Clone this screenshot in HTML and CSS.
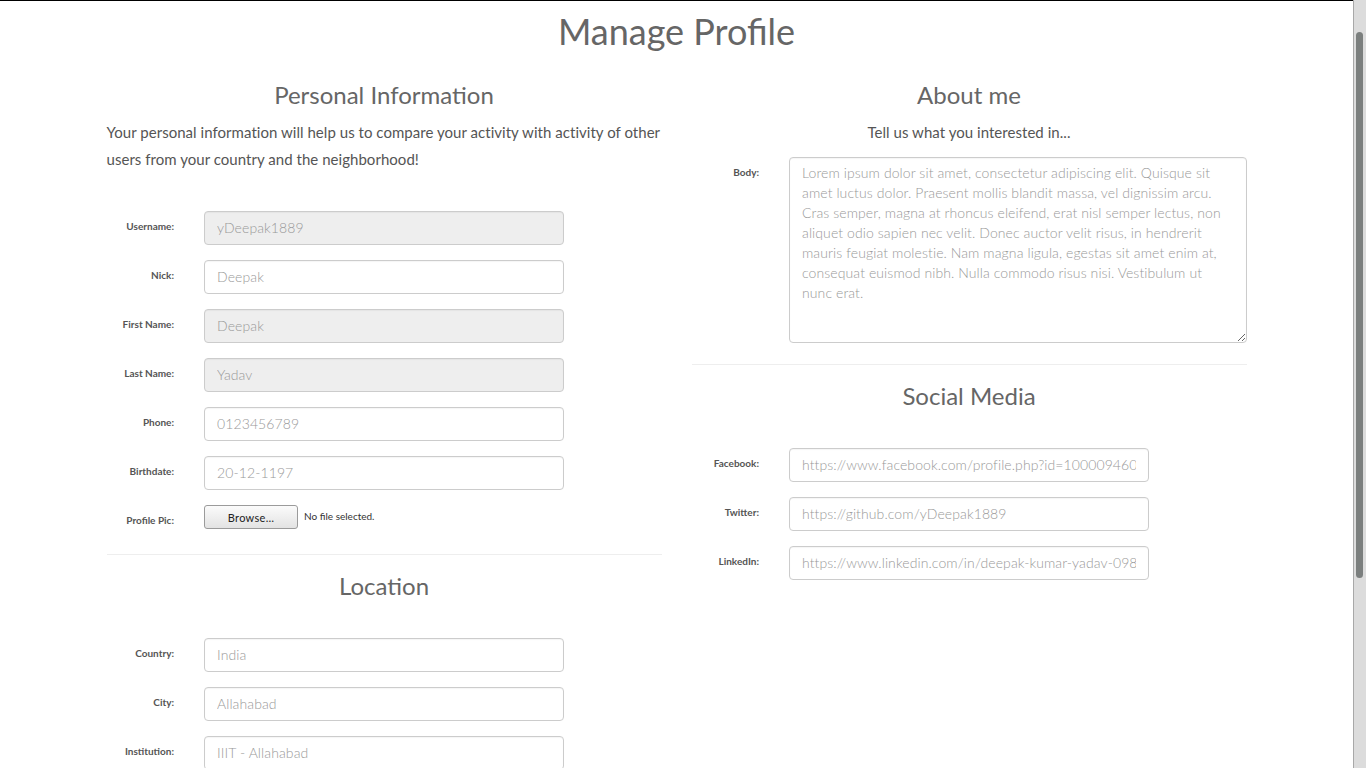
FILE: index.html
```html
<!DOCTYPE html>
<html lang="en">
<head>
<meta charset="utf-8">
<title>Manage Profile</title>
<link rel="stylesheet" href="styles.css">
</head>
<body>
<div class="page">
  <h1 class="title">Manage Profile</h1>
  <div class="columns">
    <section class="col">
      <h3 class="heading">Personal Information</h3>
      <p class="lead">Your personal information will help us to compare your activity with activity of other users from your country and the neighborhood!</p>
      <form class="form form-personal">
        <label class="lbl">Username:</label>
        <input class="field" type="text" value="yDeepak1889" disabled>
        <label class="lbl">Nick:</label>
        <input class="field" type="text" value="Deepak">
        <label class="lbl">First Name:</label>
        <input class="field" type="text" value="Deepak" disabled>
        <label class="lbl">Last Name:</label>
        <input class="field" type="text" value="Yadav" disabled>
        <label class="lbl">Phone:</label>
        <input class="field" type="text" value="0123456789">
        <label class="lbl">Birthdate:</label>
        <input class="field" type="text" value="20-12-1197">
        <label class="lbl">Profile Pic:</label>
        <div class="file">
          <button class="browse" type="button">Browse…</button>
          <span class="nofile">No file selected.</span>
        </div>
      </form>
      <hr class="rule rule-left">
      <h3 class="heading">Location</h3>
      <form class="form form-location">
        <label class="lbl">Country:</label>
        <input class="field" type="text" value="India">
        <label class="lbl">City:</label>
        <input class="field" type="text" value="Allahabad">
        <label class="lbl">Institution:</label>
        <input class="field" type="text" value="IIIT - Allahabad">
      </form>
    </section>
    <section class="col">
      <h3 class="heading">About me</h3>
      <p class="lead center">Tell us what you interested in...</p>
      <form class="form form-about">
        <label class="lbl">Body:</label>
        <textarea class="field area">Lorem ipsum dolor sit amet, consectetur adipiscing elit. Quisque sit amet luctus dolor. Praesent mollis blandit massa, vel dignissim arcu. Cras semper, magna at rhoncus eleifend, erat nisl semper lectus, non aliquet odio sapien nec velit. Donec auctor velit risus, in hendrerit mauris feugiat molestie. Nam magna ligula, egestas sit amet enim at, consequat euismod nibh. Nulla commodo risus nisi. Vestibulum ut nunc erat.</textarea>
      </form>
      <hr class="rule rule-right">
      <h3 class="heading">Social Media</h3>
      <form class="form form-social">
        <label class="lbl">Facebook:</label>
        <input class="field" type="text" value="https://www.facebook.com/profile.php?id=100009460712345">
        <label class="lbl">Twitter:</label>
        <input class="field" type="text" value="https://github.com/yDeepak1889">
        <label class="lbl">LinkedIn:</label>
        <input class="field" type="text" value="https://www.linkedin.com/in/deepak-kumar-yadav-0987654321">
      </form>
    </section>
  </div>
</div>
<div class="scrollbar"><div class="thumb"></div></div>
</body>
</html>
```
FILE: styles.css
```css
html, body {
  margin: 0;
  height: 100%;
  overflow: hidden;
  background: #fff;
}
body {
  font-family: Lato, "Open Sans", "Liberation Sans", sans-serif;
  color: #555;
}
.page {
  margin-right: 13px;
  border-top: 1px solid #000;
}
.title {
  margin: 10px 0 0;
  font-size: 36px;
  line-height: 40px;
  font-weight: 400;
  color: #666;
  text-align: center;
}
.columns {
  width: 1140px;
  margin: 30px auto 0;
  display: grid;
  grid-template-columns: 555px 555px;
  column-gap: 30px;
  align-items: start;
}
.heading {
  margin: 0;
  font-size: 24px;
  line-height: 28px;
  font-weight: 400;
  color: #666;
  text-align: center;
}
.lead {
  margin: 10px 0 0;
  font-size: 15px;
  line-height: 27px;
  letter-spacing: 0.04px;
  color: #555;
}
.lead.center { text-align: center; }
.form {
  display: grid;
  grid-template-columns: 67.5px 360px;
  column-gap: 30px;
  row-gap: 15px;
  align-items: start;
}
.form-personal { margin-top: 38px; }
.form-location { margin-top: 38px; }
.form-about { margin-top: 11px; grid-template-columns: 67.5px 457.5px; }
.form-social { margin-top: 38px; }
.lbl {
  padding-top: 8px;
  font-size: 10px;
  line-height: 14px;
  font-weight: 700;
  color: #555;
  text-align: right;
  white-space: nowrap;
}
.field {
  box-sizing: border-box;
  width: 100%;
  height: 34px;
  margin: 0;
  padding: 5px 12px 7px;
  border: 1px solid #ccc;
  border-radius: 4px;
  background: #fff;
  font-family: Lato, "Open Sans", sans-serif;
  font-size: 14px;
  font-weight: 300;
  line-height: 20px;
  letter-spacing: 0.1px;
  color: #999;
  box-shadow: inset 0 1px 1px rgba(0,0,0,0.04);
}
.field:disabled {
  background: #eee;
  color: #999;
  opacity: 1;
}
.area {
  height: 186px;
  padding-top: 5px;
  resize: vertical;
  display: block;
}
.file {
  display: flex;
  align-items: flex-start;
  gap: 6px;
  height: 23px;
}
.browse {
  box-sizing: border-box;
  width: 94px;
  height: 24px;
  padding: 0;
  border: 1px solid #9b9b9b;
  border-radius: 3px;
  background: linear-gradient(#fbfbfb, #e3e3e3);
  font-family: Lato, "Open Sans", sans-serif;
  font-size: 11px;
  letter-spacing: 0.3px;
  color: #222;
}
.nofile {
  padding-top: 5px;
  font-size: 10px;
  line-height: 12px;
  color: #333;
}
.rule {
  border: 0;
  border-top: 1px solid #eee;
  margin: 0 0 17px;
}
.rule-left { margin-top: 26px; }
.rule-right { margin-top: 21px; }
.scrollbar {
  position: fixed;
  top: 0;
  right: 0;
  bottom: 0;
  width: 12px;
  background: #dcdcdc;
  border-left: 1px solid #a8a8a8;
}
.thumb {
  position: absolute;
  top: 32px;
  left: 2px;
  width: 7px;
  height: 546px;
  border-radius: 4px;
  background: #7b7f7e;
}
```
